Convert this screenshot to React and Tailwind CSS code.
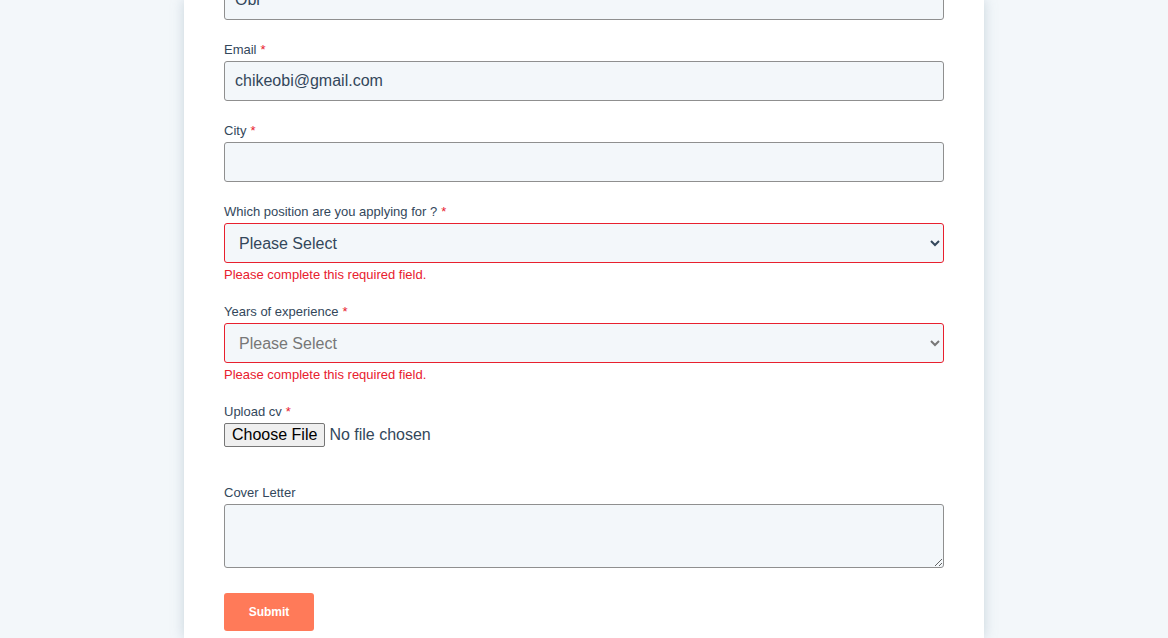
import React from "react";

const font = { fontFamily: '"Liberation Sans", Arial, sans-serif' };

function Label({ children, required = true, className = "" }) {
  return (
    <label className={"block h-4 text-[13px] leading-[18px] text-[#33475b] mb-1 " + className}>
      {children}
      {required && <span className="text-[#e8202e] ml-[4px]">*</span>}
    </label>
  );
}

const inputCls =
  "block w-[720px] h-10 box-border rounded-[3px] border border-[#8f8f8f] bg-[#f3f7fa] px-[10px] text-[16px] text-[#33475b] outline-none";

function Error() {
  return (
    <div className="mt-[3px] h-4 text-[13px] leading-[18px] text-[#e8202e]">
      Please complete this required field.
    </div>
  );
}

export default function App() {
  return (
    <div className="h-[638px] w-full overflow-hidden bg-[#f3f7fa] flex justify-center" style={font}>
      <div className="w-[800px] h-[638px] bg-white px-10 shadow-[0_0_12px_rgba(120,150,170,0.35)]">
        <div className="-mt-5">
          <input className={inputCls} defaultValue="Obi" readOnly />

          <Label className="mt-[21px]">Email</Label>
          <input className={inputCls} defaultValue="chikeobi@gmail.com" readOnly />

          <Label className="mt-[21px]">City</Label>
          <input className={inputCls} defaultValue="" readOnly />

          <Label className="mt-[21px]">Which position are you applying for ?</Label>
          <select
            className="block w-[720px] h-10 box-border rounded-[3px] border border-[#e8202e] bg-[#f3f7fa] pl-[10px] pr-2 text-[16px] text-[#33475b] outline-none"
            defaultValue=""
            style={font}
          >
            <option value="">Please Select</option>
          </select>
          <Error />

          <Label className="mt-[21px]">Years of experience</Label>
          <select
            className="block w-[720px] h-10 box-border rounded-[3px] border border-[#e8202e] bg-[#f3f7fa] pl-[10px] pr-2 text-[16px] text-[#777777] outline-none"
            defaultValue=""
            style={font}
          >
            <option value="">Please Select</option>
          </select>
          <Error />

          <Label className="mt-[21px]">Upload cv</Label>
          <div className="h-10">
            <input
              type="file"
              className="text-[16px] leading-[20px] text-[#33475b] file:mr-[4px] file:h-6 file:box-border file:border file:border-solid file:border-[#767676] file:bg-[#efefef] file:rounded-[2px] file:px-[7px] file:text-[16px] file:text-black"
              style={font}
            />
          </div>

          <Label className="mt-[21px]" required={false}>Cover Letter</Label>
          <textarea
            className="block w-[720px] h-16 box-border rounded-[3px] border border-[#8f8f8f] bg-[#f3f7fa] px-[10px] text-[16px] text-[#33475b] outline-none"
            style={font}
          />

          <button className="mt-[25px] block w-[90px] h-[38px] rounded-[3px] bg-[#ff7a59] text-white text-[12px] font-bold" style={font}>
            Submit
          </button>
        </div>
      </div>
    </div>
  );
}
